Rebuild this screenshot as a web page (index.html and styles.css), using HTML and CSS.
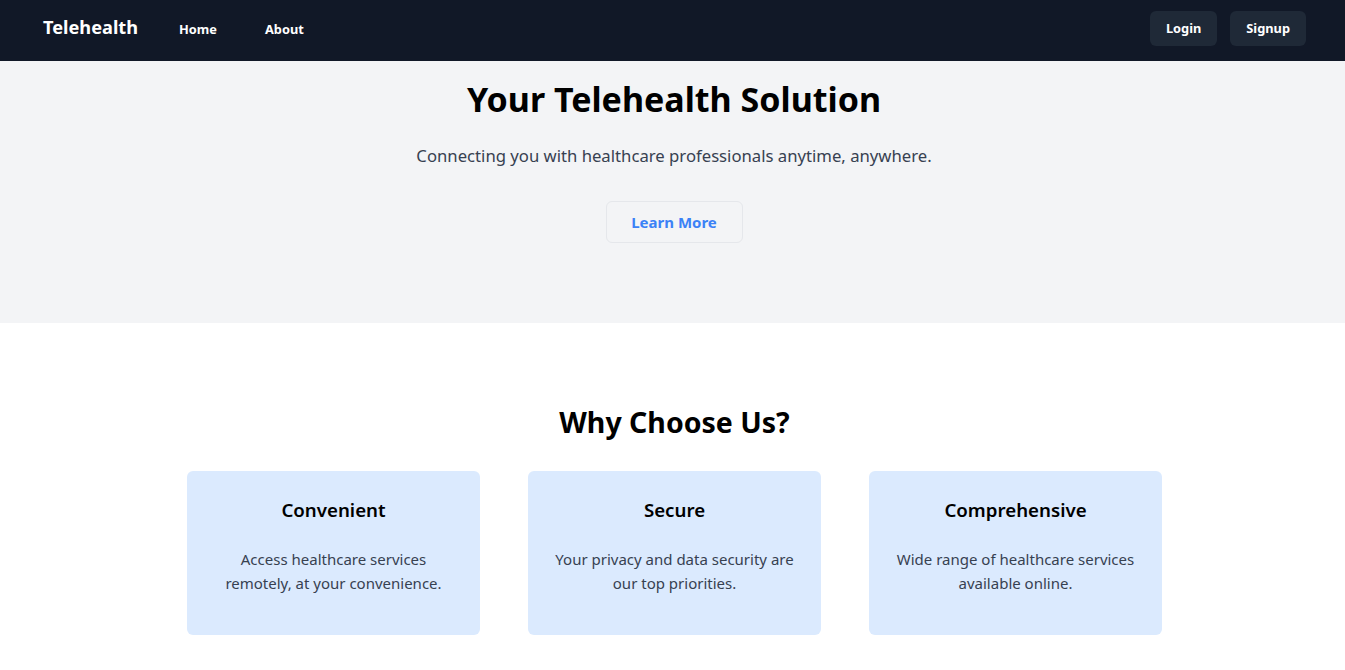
FILE: index.html
```html
<!DOCTYPE html>
<html lang="en">
<head>
<meta charset="utf-8">
<title>Telehealth</title>
<link rel="stylesheet" href="styles.css">
</head>
<body>
<nav class="nav">
  <div class="nav-left">
    <span class="logo">Telehealth</span>
    <a class="nav-link" href="#">Home</a>
    <a class="nav-link" href="#">About</a>
  </div>
  <div class="nav-right">
    <a class="nav-btn" href="#">Login</a>
    <a class="nav-btn" href="#">Signup</a>
  </div>
</nav>
<header class="hero">
  <h1 class="hero-title">Your Telehealth Solution</h1>
  <p class="hero-sub">Connecting you with healthcare professionals anytime, anywhere.</p>
  <a class="hero-btn" href="#">Learn More</a>
</header>
<section class="features">
  <h2 class="features-title">Why Choose Us?</h2>
  <div class="cards">
    <div class="card">
      <h3 class="card-title">Convenient</h3>
      <p class="card-text">Access healthcare services remotely, at your convenience.</p>
    </div>
    <div class="card">
      <h3 class="card-title">Secure</h3>
      <p class="card-text">Your privacy and data security are our top priorities.</p>
    </div>
    <div class="card">
      <h3 class="card-title">Comprehensive</h3>
      <p class="card-text">Wide range of healthcare services available online.</p>
    </div>
  </div>
</section>
</body>
</html>
```
FILE: styles.css
```css
* { box-sizing: border-box; }
html, body { margin: 0; padding: 0; }
body {
  font-family: "Noto Sans", "Open Sans", sans-serif;
  background: #ffffff;
  color: #000;
}
a { text-decoration: none; }

.nav {
  height: 61px;
  background: #111827;
  display: flex;
  align-items: center;
  justify-content: space-between;
  padding: 0 39px 0 43px;
}
.nav-left { display: flex; align-items: center; }
.logo {
  color: #fff;
  font-size: 18.2px;
  font-weight: 700;
  line-height: 28px;
  margin-top: -7px;
  margin-right: 25px;
}
.nav-link {
  color: #fff;
  font-size: 12.8px;
  font-weight: 700;
  line-height: 20px;
  padding: 8px 16px;
  margin-right: 16px;
  margin-top: -4px;
}
.nav-right { display: flex; gap: 13px; margin-top: -4px; }
.nav-btn {
  color: #fff;
  background: #1f2937;
  border-radius: 6px;
  font-size: 12.8px;
  font-weight: 700;
  line-height: 19px;
  padding: 8px 16px;
}

.hero {
  background: #f3f4f6;
  height: 262px;
  padding-top: 18px;
  display: flex;
  flex-direction: column;
  align-items: center;
  padding-left: 3px;
}
.hero-title {
  margin: 0 0 23px;
  font-size: 34px;
  line-height: 40px;
  font-weight: 700;
}
.hero-sub {
  margin: 0 0 31px;
  font-size: 16.7px;
  line-height: 28px;
  color: #374151;
}
.hero-btn {
  display: block;
  width: 137px;
  height: 42px;
  border: 1px solid #e5e7eb;
  border-radius: 6px;
  color: #3b82f6;
  font-weight: 700;
  font-size: 15px;
  line-height: 40px;
  text-align: center;
}

.features {
  padding: 81px 0 40px 4px;
  display: flex;
  flex-direction: column;
  align-items: center;
}
.features-title {
  margin: 0 0 31px;
  font-size: 28.5px;
  line-height: 36px;
  font-weight: 700;
}
.cards { display: flex; gap: 48px; }
.card {
  width: 293px;
  height: 164px;
  background: #dbeafe;
  border-radius: 6px;
  padding: 25px 24px 0;
  text-align: center;
}
.card-title {
  margin: 0 0 23px;
  font-size: 18.7px;
  line-height: 28px;
  font-weight: 600;
}
.card-text {
  margin: 0;
  font-size: 15px;
  line-height: 24px;
  color: #374151;
}
```
